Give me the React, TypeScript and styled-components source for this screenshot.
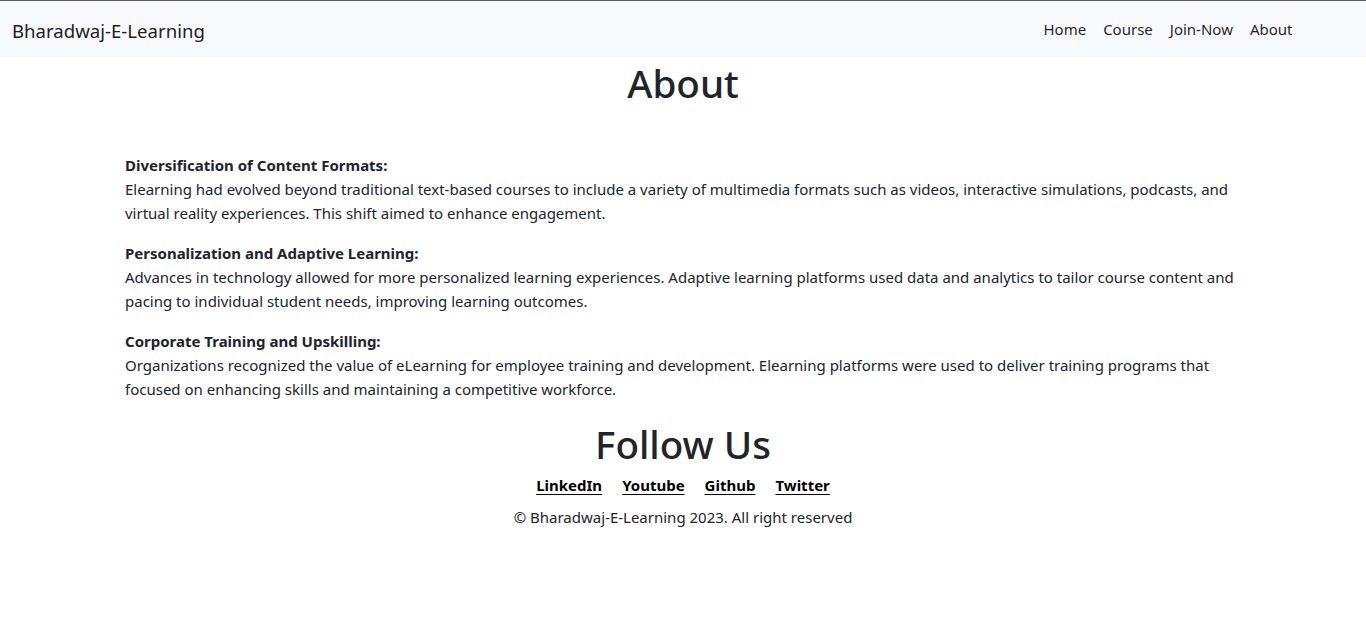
import React from "react";
import styled, { createGlobalStyle } from "styled-components";

const GlobalStyle = createGlobalStyle`
  html, body {
    margin: 0;
    padding: 0;
    background: #ffffff;
  }
  body {
    font-family: "Noto Sans", "Open Sans", sans-serif;
    font-size: 15px;
    line-height: 24px;
    color: #212529;
  }
  * { box-sizing: border-box; }
`;

const Page = styled.div`
  border-top: 1px solid #5b5b5b;
  min-height: 619px;
`;

const Navbar = styled.nav`
  height: 56px;
  background: #f8f9fa;
  display: flex;
  align-items: center;
  justify-content: space-between;
  padding: 0 65px 0 12px;
`;

const Brand = styled.a`
  font-size: 18.6px;
  line-height: 30px;
  color: rgba(0, 0, 0, 0.9);
  text-decoration: none;
  padding: 6px 0 3px;
`;

const NavList = styled.ul`
  list-style: none;
  margin: 0;
  padding: 0;
  display: flex;
`;

const NavLink = styled.a`
  display: block;
  padding: 9px 8.5px;
  font-size: 15px;
  line-height: 24px;
  color: rgba(0, 0, 0, 0.88);
  text-decoration: none;
`;

const Main = styled.main`
  width: 1140px;
  margin: 0 auto;
  padding: 0 12px;
`;

const Title = styled.h1<{ $top: number; $bottom: number }>`
  margin: ${(p) => p.$top}px 0 ${(p) => p.$bottom}px;
  font-size: 38.6px;
  line-height: 48px;
  font-weight: 500;
  text-align: center;
  color: #212529;
`;

const Section = styled.p`
  margin: 0 0 16px;
`;

const Lead = styled.strong`
  display: block;
  font-weight: 700;
`;

const Footer = styled.footer`
  display: flex;
  flex-direction: column;
  align-items: center;
`;

const Social = styled.div`
  display: flex;
  gap: 20px;
  margin-top: 5px;
`;

const SocialLink = styled.a`
  color: #000;
  font-weight: 700;
  text-decoration: underline;
  text-underline-offset: 3px;
`;

const Copy = styled.p`
  margin: 8px 0 0;
`;

const sections = [
  {
    title: "Diversification of Content Formats:",
    text: "Elearning had evolved beyond traditional text-based courses to include a variety of multimedia formats such as videos, interactive simulations, podcasts, and virtual reality experiences. This shift aimed to enhance engagement.",
  },
  {
    title: "Personalization and Adaptive Learning:",
    text: "Advances in technology allowed for more personalized learning experiences. Adaptive learning platforms used data and analytics to tailor course content and pacing to individual student needs, improving learning outcomes.",
  },
  {
    title: "Corporate Training and Upskilling:",
    text: "Organizations recognized the value of eLearning for employee training and development. Elearning platforms were used to deliver training programs that focused on enhancing skills and maintaining a competitive workforce.",
  },
];

export default function App() {
  return (
    <Page>
      <GlobalStyle />
      <Navbar>
        <Brand href="#">Bharadwaj-E-Learning</Brand>
        <NavList>
          {["Home", "Course", "Join-Now", "About"].map((l) => (
            <li key={l}>
              <NavLink href="#">{l}</NavLink>
            </li>
          ))}
        </NavList>
      </Navbar>
      <Main>
        <Title $top={2} $bottom={46}>About</Title>
        {sections.map((s) => (
          <Section key={s.title}>
            <Lead>{s.title}</Lead>
            {s.text}
          </Section>
        ))}
      </Main>
      <Footer>
        <Title $top={3} $bottom={0}>Follow Us</Title>
        <Social>
          <SocialLink href="#">LinkedIn</SocialLink>
          <SocialLink href="#">Youtube</SocialLink>
          <SocialLink href="#">Github</SocialLink>
          <SocialLink href="#">Twitter</SocialLink>
        </Social>
        <Copy>© Bharadwaj-E-Learning 2023. All right reserved</Copy>
      </Footer>
    </Page>
  );
}
